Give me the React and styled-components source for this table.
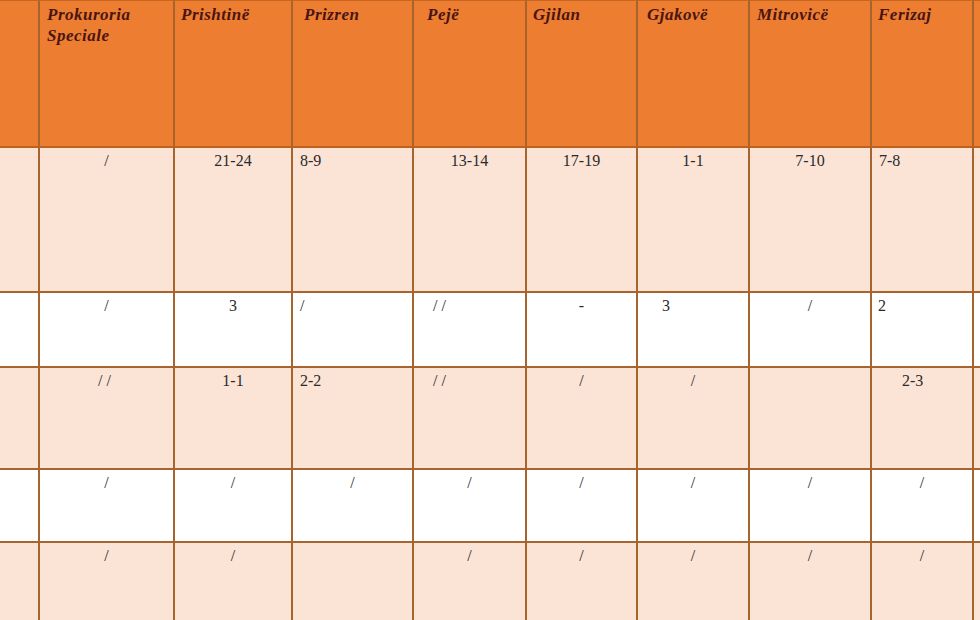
import React from "react"
import styled, { createGlobalStyle } from "styled-components"

const GlobalStyle = createGlobalStyle`
  html, body {
    margin: 0;
    padding: 0;
    background: #ffffff;
  }
`

const columns = [40, 135, 118, 121, 113, 111, 112, 122, 102, 20]

const header = [
  { t: "" },
  { t: "Prokuroria Speciale", i: 8 },
  { t: "Prishtinë", i: 7 },
  { t: "Prizren", i: 12 },
  { t: "Pejë", i: 14 },
  { t: "Gjilan", i: 7 },
  { t: "Gjakovë", i: 10 },
  { t: "Mitrovicë", i: 8 },
  { t: "Ferizaj", i: 7 },
  { t: "" },
]

const C = t => ({ t, a: "center" })
const L = (t, i = 8) => ({ t, a: "left", i })
const E = { t: "" }

const rows = [
  {
    h: 145,
    tone: "peach",
    cells: [E, C("/"), C("21-24"), L("8-9"), C("13-14"), C("17-19"), C("1-1"), C("7-10"), L("7-8"), E],
  },
  {
    h: 75,
    tone: "white",
    cells: [E, C("/"), C("3"), L("/"), L("//", 20), C("-"), L("3", 25), C("/"), L("2", 7), E],
  },
  {
    h: 102,
    tone: "peach",
    cells: [E, C("//"), C("1-1"), L("2-2"), L("//", 20), C("/"), C("/"), E, L("2-3", 31), E],
  },
  {
    h: 73,
    tone: "white",
    cells: [E, C("/"), C("/"), C("/"), C("/"), C("/"), C("/"), C("/"), C("/"), E],
  },
  {
    h: 90,
    tone: "peach",
    cells: [E, C("/"), C("/"), E, C("/"), C("/"), C("/"), C("/"), C("/"), E],
  },
]

const App = () => (
  <>
    <GlobalStyle />
    <Page>
      <Table $cols={columns}>
        {header.map((cell, idx) => (
          <HeadCell key={"h" + idx} $indent={cell.i}>
            {cell.t}
          </HeadCell>
        ))}
        {rows.map((row, r) =>
          row.cells.map((cell, idx) => (
            <BodyCell
              key={r + "-" + idx}
              $height={row.h}
              $tone={row.tone}
              $align={cell.a}
              $indent={cell.i}
              $double={cell.t === "//"}
            >
              {cell.t}
            </BodyCell>
          ))
        )}
      </Table>
    </Page>
  </>
)

const Page = styled.div`
  width: 980px;
  height: 620px;
  overflow: hidden;
  background: #ffffff;
`

const Table = styled.div`
  display: grid;
  grid-template-columns: ${p => p.$cols.map(c => c + "px").join(" ")};
  width: max-content;
`

const Cell = styled.div`
  box-sizing: border-box;
  border-right: 2px solid #a8642d;
  border-bottom: 2px solid #a8642d;
`

const HeadCell = styled(Cell)`
  height: 148px;
  background: #ed7d31;
  border-top: 1px solid #c8661f;
  border-bottom-color: #c0621f;
  padding: 3px 4px 0 ${p => (p.$indent || 8) - 1}px;
  font-family: "Liberation Serif", "Times New Roman", serif;
  font-weight: bold;
  font-style: italic;
  font-size: 17px;
  letter-spacing: 0.5px;
  line-height: 21px;
  color: #4a1512;
`

const BodyCell = styled(Cell)`
  height: ${p => p.$height}px;
  background: ${p => (p.$tone === "peach" ? "#fbe3d6" : "#ffffff")};
  padding: 3px 4px 0 ${p => (p.$align === "left" ? (p.$indent || 8) - 1 : 4)}px;
  text-align: ${p => p.$align || "left"};
  font-family: "Liberation Serif", "Times New Roman", serif;
  font-size: 16px;
  line-height: 20px;
  letter-spacing: ${p => (p.$double ? "4px" : "0")};
  color: #2a2a2a;
`

export default App
